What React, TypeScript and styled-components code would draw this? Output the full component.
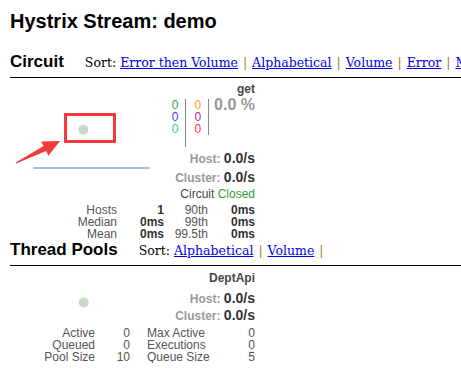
import styled, { createGlobalStyle } from 'styled-components'

const GlobalStyle = createGlobalStyle`
  html, body {
    margin: 0;
    padding: 0;
    background: #ffffff;
    overflow: hidden;
  }
  body {
    font-family: 'Liberation Sans', Arial, sans-serif;
    color: #333333;
  }
`

const CIRCUIT_SORTS = [
  'Error then Volume',
  'Alphabetical',
  'Volume',
  'Error',
  'Mean',
  'Median',
  '90',
  '99',
  '99.5',
]
const POOL_SORTS = ['Alphabetical', 'Volume']

const Page = styled.div`
  padding: 10px 0 0 10px;
`

const Title = styled.h2`
  margin: 0 0 19px;
  font-size: 20px;
  line-height: 23px;
  font-weight: bold;
  color: #000000;
`

const SectionHeader = styled.div`
  display: flex;
  align-items: baseline;
  padding-bottom: 5px;
  border-bottom: 1px solid #000000;
  white-space: nowrap;
`

const SectionTitle = styled.h3`
  margin: 0 21px 0 0;
  font-size: 17px;
  line-height: 20px;
  font-weight: bold;
  color: #000000;
`

const SortMenu = styled.div`
  font-family: 'DejaVu Serif', 'Liberation Serif', serif;
  font-size: 12.5px;
  line-height: 16px;
  color: #000000;

  a {
    color: #0000ee;
    text-decoration: underline;
  }
`

const Sep = styled.span`
  color: #a0782d;
  margin: 0 5px;
`

const Monitor = styled.div<{ $top: number }>`
  width: 245px;
  padding-top: ${(p) => p.$top}px;
`

const MonitorTop = styled.div`
  display: grid;
  grid-template-columns: 150px 95px;
`

const ChartArea = styled.div`
  position: relative;

  svg {
    display: block;
  }
`

const Overlay = styled.svg`
  position: absolute;
  left: 0;
  top: 0;
  overflow: visible;
`

const Stats = styled.div`
  display: flex;
  flex-direction: column;
  align-items: flex-end;
  text-align: right;
`

const Name = styled.div`
  font-size: 12px;
  line-height: 14px;
  font-weight: bold;
  color: #474747;
`

const Counters = styled.div`
  display: flex;
  margin-top: 3px;
`

type CounterCellProps = { $lines: number }
const CounterCell = styled.div<CounterCellProps>`
  display: flex;
  flex-direction: column;
  height: ${(p) => p.$lines * 12}px;
  padding: 0 7px 0 8px;
  border-right: 1px solid #8a8a8a;
  font-size: 12px;
  line-height: 12px;
`

const Count = styled.span<{ $color: string }>`
  color: ${(p) => p.$color};
`

const Percent = styled.div`
  padding-left: 5px;
  font-size: 16px;
  line-height: 11px;
  font-weight: bold;
  color: #999999;
`

type RatesProps = { $gap: number; $lh: number }
const Rates = styled.div<RatesProps>`
  margin-top: ${(p) => p.$gap}px;
  line-height: ${(p) => p.$lh}px;
`

const Rate = styled.div`
  font-size: 14px;
  font-weight: bold;
  color: #333333;
`

const RateLabel = styled.span`
  font-size: 12px;
  color: #999999;
`

const Status = styled.div`
  font-size: 12px;
  line-height: 14px;
  color: #474747;
`

const Closed = styled.span`
  color: #2f9e2f;
`

type TableProps = { $cols: string; $gap: number }
const StatsTable = styled.div<TableProps>`
  display: grid;
  grid-template-columns: ${(p) => p.$cols};
  margin-top: ${(p) => p.$gap}px;
  font-size: 12px;
  line-height: 12px;
  color: #555555;
  white-space: nowrap;
`

type CellProps = { $bold?: boolean; $left?: boolean }
const Cell = styled.div<CellProps>`
  text-align: ${(p) => (p.$left ? 'left' : 'right')};
  padding-left: ${(p) => (p.$left ? '17px' : '0')};
  font-weight: ${(p) => (p.$bold ? 'bold' : 'normal')};
  color: ${(p) => (p.$bold ? '#333333' : '#555555')};
`

function Sorts({ items }: { items: string[] }) {
  return (
    <SortMenu>
      Sort:{' '}
      {items.map((s, i) => (
        <span key={s}>
          <a href="#">{s}</a>
          {(i < items.length - 1 || items.length < 3) && <Sep>|</Sep>}
        </span>
      ))}
    </SortMenu>
  )
}

function RateLines({ gap, lh }: { gap: number; lh: number }) {
  return (
    <Rates $gap={gap} $lh={lh}>
      <Rate>
        <RateLabel>Host: </RateLabel>0.0/s
      </Rate>
      <Rate>
        <RateLabel>Cluster: </RateLabel>0.0/s
      </Rate>
    </Rates>
  )
}

function CircuitMonitor() {
  const rows = [
    ['Hosts', '1', '90th', '0ms'],
    ['Median', '0ms', '99th', '0ms'],
    ['Mean', '0ms', '99.5th', '0ms'],
  ]
  return (
    <Monitor $top={4}>
      <MonitorTop>
        <ChartArea>
          <svg width="150" height="117">
            <circle cx="73.3" cy="47.7" r="5" fill="#c9d9c9" />
            <line x1="23.3" y1="86" x2="140" y2="86" stroke="#a7bfd7" strokeWidth="2" />
          </svg>
          <Overlay width="150" height="117">
            <rect x="55.5" y="32.5" width="49" height="27" fill="none" stroke="#f33b3b" strokeWidth="3" />
            <polygon
              points="5.8,80.6 33.5,64.1 31.2,59.4 50,59 38.4,73.8 36.1,69.1 6.2,81.4"
              fill="#f33b3b"
            />
          </Overlay>
        </ChartArea>
        <Stats>
          <Name>get</Name>
          <Counters>
            <CounterCell $lines={4}>
              <Count $color="#39a339">0</Count>
              <Count $color="#3a3aff">0</Count>
              <Count $color="#1fcc9c">0</Count>
            </CounterCell>
            <CounterCell $lines={3}>
              <Count $color="#ff9f1a">0</Count>
              <Count $color="#9a2aa8">0</Count>
              <Count $color="#ff3333">0</Count>
            </CounterCell>
            <Percent>0.0 %</Percent>
          </Counters>
          <RateLines gap={2} lh={18} />
          <Status>
            Circuit <Closed>Closed</Closed>
          </Status>
        </Stats>
      </MonitorTop>
      <StatsTable $cols="107px 47px 44px 47px" $gap={3}>
        {rows.map((r) => [
          <Cell key={r[0]}>{r[0]}</Cell>,
          <Cell key={r[0] + 'a'} $bold>
            {r[1]}
          </Cell>,
          <Cell key={r[0] + 'b'}>{r[2]}</Cell>,
          <Cell key={r[0] + 'c'} $bold>
            {r[3]}
          </Cell>,
        ])}
      </StatsTable>
    </Monitor>
  )
}

function PoolMonitor() {
  const rows = [
    ['Active', '0', 'Max Active', '0'],
    ['Queued', '0', 'Executions', '0'],
    ['Pool Size', '10', 'Queue Size', '5'],
  ]
  return (
    <Monitor $top={5}>
      <MonitorTop>
        <ChartArea>
          <svg width="150" height="51">
            <circle cx="73.7" cy="31.5" r="5" fill="#c9d9c9" />
          </svg>
        </ChartArea>
        <Stats>
          <Name>DeptApi</Name>
          <RateLines gap={5} lh={16} />
        </Stats>
      </MonitorTop>
      <StatsTable $cols="85px 35px 92px 33px" $gap={3}>
        {rows.map((r) => [
          <Cell key={r[0]}>{r[0]}</Cell>,
          <Cell key={r[0] + 'a'}>{r[1]}</Cell>,
          <Cell key={r[0] + 'b'} $left>
            {r[2]}
          </Cell>,
          <Cell key={r[0] + 'c'}>{r[3]}</Cell>,
        ])}
      </StatsTable>
    </Monitor>
  )
}

export default function App() {
  return (
    <Page>
      <GlobalStyle />
      <Title>Hystrix Stream: demo</Title>
      <SectionHeader>
        <SectionTitle>Circuit</SectionTitle>
        <Sorts items={CIRCUIT_SORTS} />
      </SectionHeader>
      <CircuitMonitor />
      <SectionHeader>
        <SectionTitle>Thread Pools</SectionTitle>
        <Sorts items={POOL_SORTS} />
      </SectionHeader>
      <PoolMonitor />
    </Page>
  )
}
